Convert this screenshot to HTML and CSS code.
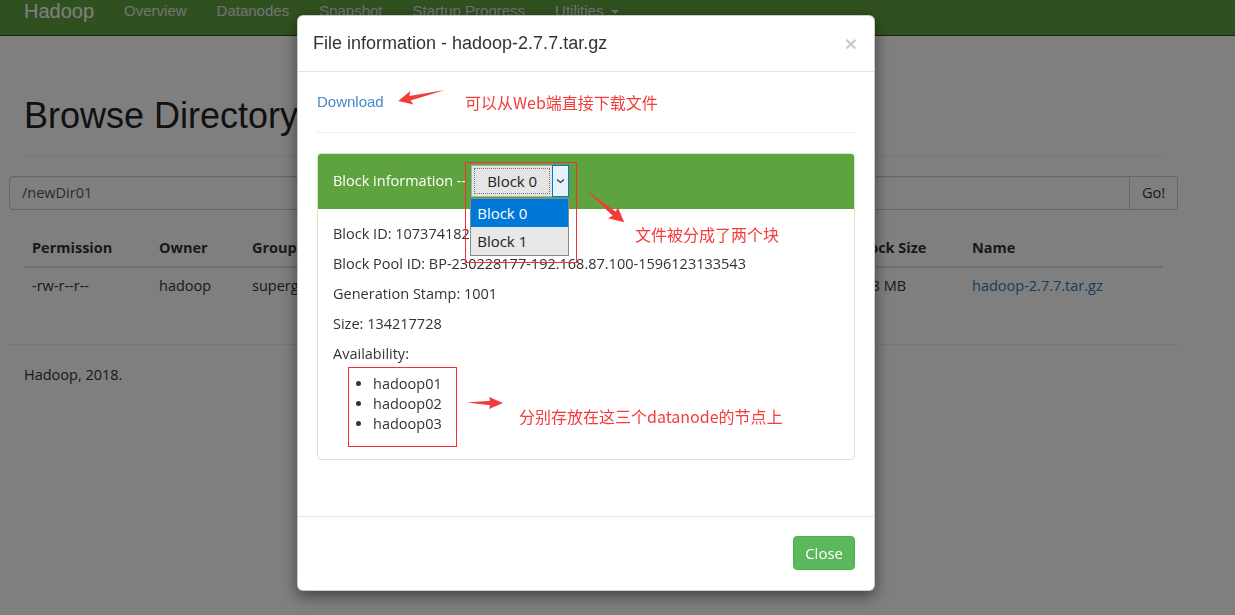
FILE: index.html
```html
<!DOCTYPE html>
<html lang="en">
<head>
<meta charset="utf-8">
<title>Browse Directory</title>
<link rel="stylesheet" href="styles.css">
</head>
<body>
<div class="page">
  <nav class="navbar">
    <span class="brand">Hadoop</span>
    <ul class="nav-links">
      <li>Overview</li>
      <li>Datanodes</li>
      <li>Snapshot</li>
      <li>Startup Progress</li>
      <li>Utilities <span class="caret"></span></li>
    </ul>
  </nav>
  <div class="container">
    <div class="page-header"><h1>Browse Directory</h1></div>
    <div class="input-group">
      <div class="form-control">/newDir01</div>
      <div class="btn-go">Go!</div>
    </div>
    <table class="table">
      <colgroup>
        <col class="c-perm"><col class="c-owner"><col class="c-group"><col class="c-size"><col class="c-mod"><col class="c-rep"><col class="c-bs"><col class="c-name">
      </colgroup>
      <thead>
        <tr><th>Permission</th><th>Owner</th><th>Group</th><th>Size</th><th>Last Modified</th><th>Replication</th><th>Block Size</th><th>Name</th></tr>
      </thead>
      <tbody>
        <tr><td>-rw-r--r--</td><td>hadoop</td><td>supergroup</td><td>199.67 MB</td><td>2020/7/31 下午3:12:08</td><td>3</td><td>128 MB</td><td><span class="link">hadoop-2.7.7.tar.gz</span></td></tr>
      </tbody>
    </table>
    <hr class="foot-hr">
    <div class="footer">Hadoop, 2018.</div>
  </div>
</div>

<div class="backdrop"></div>

<div class="modal">
  <div class="modal-header">
    <h4 class="modal-title">File information - hadoop-2.7.7.tar.gz</h4>
    <span class="close">&times;</span>
  </div>
  <div class="modal-body">
    <div class="download"><span class="dl-link">Download</span></div>
    <hr class="body-hr">
    <div class="panel">
      <div class="panel-heading">
        <span class="ph-text">Block information --</span>
        <div class="select">
          <div class="select-box">
            <span class="select-value">Block 0</span>
            <span class="select-arrow">
              <svg width="9" height="6" viewBox="0 0 9 6"><path d="M1 1.5 L4.5 4.5 L8 1.5" fill="none" stroke="#333" stroke-width="1.1"/></svg>
            </span>
          </div>
          <ul class="select-list">
            <li class="opt opt-active">Block 0</li>
            <li class="opt">Block 1</li>
          </ul>
        </div>
      </div>
      <div class="panel-body">
        <p>Block ID: 1073741825</p>
        <p>Block Pool ID: BP-230228177-192.168.87.100-1596123133543</p>
        <p>Generation Stamp: 1001</p>
        <p>Size: 134217728</p>
        <p>Availability:</p>
        <ul class="avail">
          <li>hadoop01</li>
          <li>hadoop02</li>
          <li>hadoop03</li>
        </ul>
      </div>
    </div>
  </div>
  <div class="modal-footer">
    <span class="btn-close">Close</span>
  </div>
</div>

<div class="annot">
  <div class="rbox rbox-select"></div>
  <div class="rbox rbox-list"></div>
  <span class="note note1">可以从Web端直接下载文件</span>
  <span class="note note2">文件被分成了两个块</span>
  <span class="note note3">分别存放在这三个datanode的节点上</span>
  <svg class="arrows" width="1235" height="615" viewBox="0 0 1235 615">
    <g fill="#f23c3c">
      <polygon transform="translate(445 90) rotate(166.8)" points="0,0 36,-2.4 34,-7 48,0 34,7 36,2.4"/>
      <polygon transform="translate(586 190) rotate(40.1)" points="0,0 37,-2.6 35,-7.5 50,0 35,7.5 37,2.6"/>
      <polygon transform="translate(467 403) rotate(0)" points="0,-0.5 23,-2.2 22,-6 36,0 22,6 23,2.2"/>
    </g>
  </svg>
</div>
</body>
</html>
```

FILE: styles.css
```css
* { box-sizing: border-box; }
html, body { margin: 0; padding: 0; }
body {
  width: 1235px;
  height: 615px;
  overflow: hidden;
  background: #fff;
  color: #333;
  font-family: "Open Sans", "Noto Sans", sans-serif;
  font-size: 14.5px;
  line-height: 20px;
}

/* ---------- background page ---------- */
.navbar {
  height: 36px;
  background: #5fa33e;
  border-bottom: 1px solid #2c4d1c;
  display: flex;
  align-items: flex-start;
  padding-left: 24px;
  font-family: "Liberation Sans", Arial, sans-serif;
}
.brand {
  font-size: 20px;
  line-height: 22px;
  color: #fff;
  padding-right: 15px;
}
.nav-links {
  display: flex;
  list-style: none;
  margin: 0;
  padding: 0;
}
.nav-links li {
  padding: 0 15px;
  font-size: 15px;
  line-height: 22px;
  color: #e6e6e6;
}
.caret {
  display: inline-block;
  width: 0;
  height: 0;
  margin-left: 3px;
  vertical-align: middle;
  border-top: 4px solid #e6e6e6;
  border-left: 4px solid transparent;
  border-right: 4px solid transparent;
}

.container {
  padding: 0 57px 0 9px;
}
.page-header {
  margin: 60px 15px 20px;
  padding-bottom: 9px;
  border-bottom: 1px solid #eee;
}
.page-header h1 {
  margin: 0 0 10px;
  font-family: "Liberation Sans", Arial, sans-serif;
  font-weight: normal;
  font-size: 36px;
  line-height: 40px;
  color: #222;
}
.input-group {
  display: flex;
  height: 34px;
}
.form-control {
  flex: 1;
  border: 1px solid #ccc;
  border-radius: 4px 0 0 4px;
  padding: 6px 12px;
  color: #555;
  box-shadow: inset 0 1px 1px rgba(0,0,0,.075);
}
.btn-go {
  width: 48px;
  border: 1px solid #ccc;
  border-left: none;
  border-radius: 0 4px 4px 0;
  padding: 6px 0;
  text-align: center;
  color: #333;
}
.table {
  width: calc(100% - 30px);
  margin: 20px 15px 40px;
  border-collapse: collapse;
  table-layout: fixed;
}
.c-perm { width: 127px; }
.c-owner { width: 93px; }
.c-group { width: 110px; }
.c-size { width: 110px; }
.c-mod { width: 250px; }
.c-rep { width: 133px; }
.c-bs { width: 117px; }
.table th, .table td {
  text-align: left;
  padding: 8px;
  white-space: nowrap;
  overflow: hidden;
}
.table th {
  font-weight: bold;
  border-bottom: 2px solid #ddd;
}
.table td { border-top: 1px solid #ddd; }
.link { color: #337ab7; }
.foot-hr {
  margin: 20px 0;
  border: 0;
  border-top: 1px solid #eee;
}
.footer { margin: 0 15px; }

/* ---------- modal ---------- */
.backdrop {
  position: fixed;
  inset: 0;
  background: rgba(0,0,0,.5);
}
.modal {
  position: fixed;
  left: 297px;
  top: 15px;
  width: 578px;
  background: #fff;
  border: 1px solid rgba(0,0,0,.2);
  border-radius: 6px;
  box-shadow: 0 5px 15px rgba(0,0,0,.5);
}
.modal-header {
  display: flex;
  justify-content: space-between;
  align-items: center;
  padding: 15px;
  border-bottom: 1px solid #e5e5e5;
}
.modal-title {
  margin: 0;
  font-family: "Liberation Sans", Arial, sans-serif;
  font-weight: normal;
  font-size: 18px;
  line-height: 25px;
  color: #333;
}
.close {
  font-family: "Liberation Sans", Arial, sans-serif;
  font-size: 21px;
  font-weight: bold;
  line-height: 1;
  color: #000;
  opacity: .2;
  margin-right: 2px;
}
.modal-body {
  padding: 20px 19px 36px 19px;
}
.download {
  font-family: "Liberation Sans", Arial, sans-serif;
  font-size: 15px;
  line-height: 20px;
}
.dl-link { color: #428bca; }
.body-hr {
  margin: 20px 0;
  border: 0;
  border-top: 1px solid #eee;
}
.panel {
  border: 1px solid #d6e9c6;
  border-radius: 4px;
  margin-bottom: 20px;
}
.panel-heading {
  display: flex;
  align-items: center;
  padding: 11px 15px 12px;
  background: #5fa33e;
  color: #fff;
  border-radius: 3px 3px 0 0;
}
.select {
  position: relative;
  margin-left: 5px;
}
.select-box {
  display: flex;
  width: 98px;
  height: 32px;
  background: #e5e5e5;
  border: 1px solid #adadad;
  color: #222;
  font-size: 15px;
}
.select-value {
  flex: 1;
  margin: 2px;
  border: 1px dotted #777;
  text-align: center;
  line-height: 24px;
}
.select-arrow {
  width: 17px;
  margin: -1px -1px -1px 0;
  background: #e5f1fb;
  border: 1px solid #0078d7;
  display: flex;
  align-items: center;
  justify-content: center;
}
.select-list {
  position: absolute;
  left: -1px;
  top: 33px;
  width: 99px;
  margin: 0;
  padding: 0;
  list-style: none;
  border: 1px solid #828790;
  background: #e8e8e8;
  color: #222;
  font-size: 15px;
}
.opt {
  height: 28px;
  line-height: 28px;
  padding-left: 6px;
}
.opt-active {
  background: #0078d7;
  color: #fff;
}
.panel-body {
  padding: 15px;
  color: #333;
}
.panel-body p { margin: 0 0 10px; }
.avail {
  margin: 0 0 10px;
  padding-left: 40px;
}
.modal-footer {
  border-top: 1px solid #e5e5e5;
  padding: 19px 19px 20px;
  display: flex;
  justify-content: flex-end;
}
.btn-close {
  display: inline-block;
  padding: 6px 11px;
  line-height: 20px;
  font-size: 15px;
  color: #fff;
  background: #5cb85c;
  border: 1px solid #4cae4c;
  border-radius: 4px;
}

/* ---------- annotations ---------- */
.annot {
  position: fixed;
  inset: 0;
  pointer-events: none;
}
.rbox {
  position: absolute;
  border: 1px solid #f32f2f;
}
.rbox-select { left: 465px; top: 162px; width: 112px; height: 101px; }
.rbox-list { left: 348px; top: 367px; width: 109px; height: 80px; }
.note {
  position: absolute;
  font-family: "Noto Sans CJK SC", sans-serif;
  font-size: 16px;
  line-height: 20px;
  color: #f43c3c;
  white-space: nowrap;
}
.note1 { left: 465px; top: 92px; }
.note2 { left: 635px; top: 224px; }
.note3 { left: 519px; top: 406px; }
.arrows {
  position: absolute;
  left: 0;
  top: 0;
}
```
